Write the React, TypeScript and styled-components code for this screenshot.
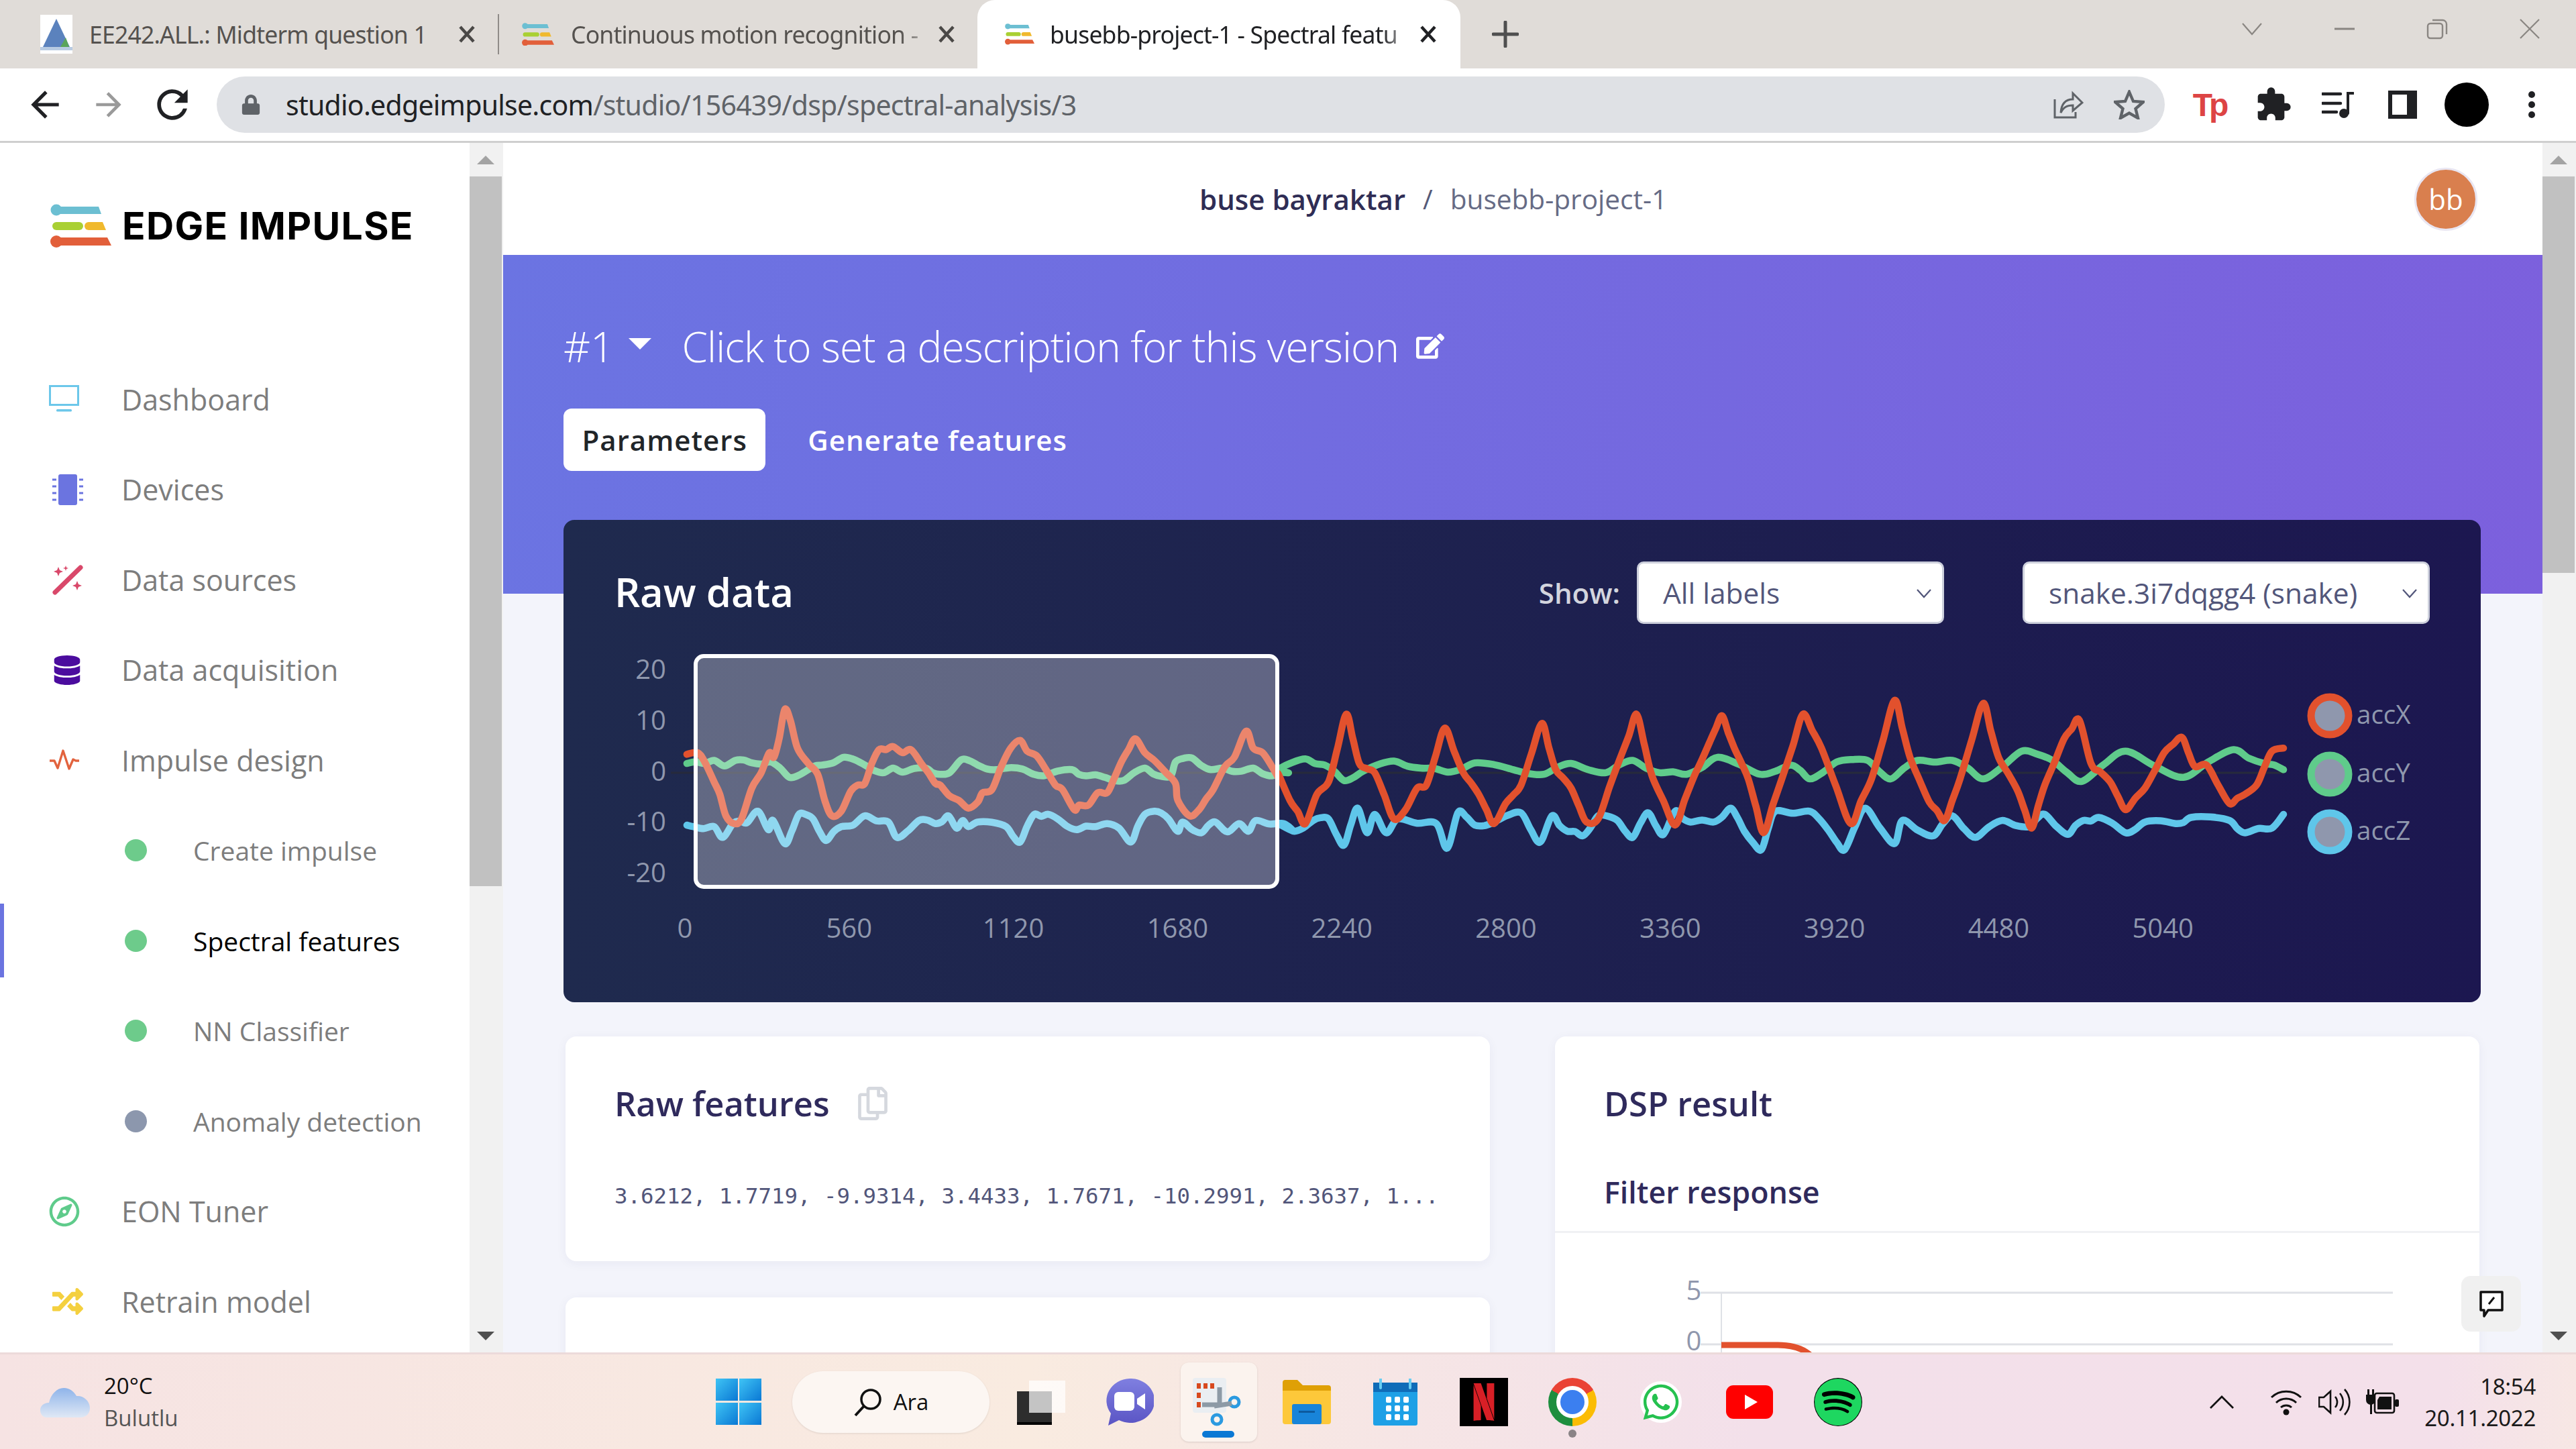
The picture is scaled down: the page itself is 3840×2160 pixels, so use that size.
import React from "react";
import styled, { createGlobalStyle } from "styled-components";
import { FaDatabase, FaRegCompass, FaRandom, FaRegCopy, FaEdit, FaWhatsapp, FaSpotify, FaLock } from "react-icons/fa";
import { MdArrowBack, MdArrowForward, MdRefresh, MdExtension } from "react-icons/md";
import { SiNetflix } from "react-icons/si";

const Global = createGlobalStyle`
  html, body { margin: 0; padding: 0; background: #fff; }
  #root { width: 3840px; height: 2160px; overflow: hidden; }
  * { box-sizing: border-box; }
`;

const Screen = styled.div`
  width: 3840px; height: 2160px; display: flex; flex-direction: column;
  font-family: "Open Sans", "Noto Sans", sans-serif; overflow: hidden;
`;

/* ---------- browser chrome ---------- */
const TabStrip = styled.div`
  height: 102px; background: #e0dcd8; display: flex; align-items: stretch; padding-left: 40px; flex: none;
`;
const Tab = styled.div<{ $w: number; $pl: number; $active?: boolean }>`
  width: ${p => p.$w}px; display: flex; align-items: center; position: relative;
  padding-left: ${p => p.$pl}px; padding-right: ${p => (p.$active ? 33 : 31)}px;
  background: ${p => (p.$active ? "#fff" : "transparent")};
  border-radius: ${p => (p.$active ? "26px 26px 0 0" : "0")};
`;
const TabSep = styled.div`
  width: 2px; height: 60px; background: #8f8b88; align-self: center; flex: none;
`;
const Favicon = styled.span`
  width: 48px; height: 48px; flex: none; display: flex; align-items: center; justify-content: center;
`;
const TabTitle = styled.span<{ $active?: boolean; $fade?: boolean }>`
  flex: 1; margin-left: ${p => (p.$active ? 21 : 25)}px; font-family: "Noto Sans", sans-serif; font-size: 35.5px;
  letter-spacing: -0.8px; white-space: nowrap; overflow: hidden;
  color: ${p => (p.$active ? "#202124" : "#55524f")};
  ${p => p.$fade ? "-webkit-mask-image: linear-gradient(90deg,#000 90%,transparent); mask-image: linear-gradient(90deg,#000 90%,transparent);" : ""}
`;
const NewTab = styled.div`
  width: 134px; display: flex; align-items: center; justify-content: center; flex: none;
`;
const WinControls = styled.div`
  margin-left: auto; display: flex; align-items: center; padding-bottom: 16px;
`;
const WinBtn = styled.div`
  width: 138px; display: flex; justify-content: center; align-items: center;
`;
const Toolbar = styled.div`
  height: 111px; flex: none; background: #fff; border-bottom: 3px solid #cfcfcf; display: flex; align-items: flex-start; padding-top: 12px;
`;
const NavIcon = styled.div<{ $w: number; $mr?: number }>`
  width: ${p => p.$w}px; height: 84px; margin-right: ${p => p.$mr || 0}px; display: flex; align-items: center; justify-content: center; flex: none;
`;
const Omnibox = styled.div`
  width: 2904px; height: 84px; border-radius: 42px; background: #dfe1e5; display: flex; align-items: center;
  padding-left: 36px; padding-right: 30px; flex: none;
`;
const Url = styled.span`
  margin-left: 37px; font-family: "Noto Sans", sans-serif; font-size: 41px; letter-spacing: -0.75px; color: #5f6368; white-space: nowrap; flex: 1;
`;
const UrlHost = styled.span` color: #202124; `;
const ExtRow = styled.div`
  display: flex; align-items: center; height: 84px; padding-left: 18px;
`;
const TpBadge = styled.span`
  font-family: "Liberation Sans", sans-serif; font-weight: 700; font-size: 48px; letter-spacing: -5px; color: #dd4444;
`;
const SidePanel = styled.div`
  width: 43px; height: 42px; border: solid #202124; border-width: 6px 15px 6px 6px; background: #fff;
`;
const ProfileDot = styled.div`
  width: 66px; height: 66px; border-radius: 50%; background: #000;
`;
const Dots = styled.div`
  display: flex; flex-direction: column; gap: 5px; span { width: 10px; height: 10px; border-radius: 50%; background: #202124; }
`;

/* ---------- body ---------- */
const Body = styled.div`
  flex: 1; min-height: 0; display: flex; background: #fff;
`;
const Sidebar = styled.nav`
  width: 700px; flex: none; overflow: hidden; background: #fff; display: flex; flex-direction: column;
`;
const LogoBlock = styled.div`
  height: 315px; flex: none; padding: 91px 0 0 75px; display: flex; align-items: flex-start; gap: 16px;
`;
const Brand = styled.span`
  font-family: "Inter", sans-serif; font-weight: 700; font-size: 57px; letter-spacing: 1.35px; color: #000; line-height: 66px; white-space: nowrap;
`;
const NavRow = styled.div<{ $sub?: boolean; $active?: boolean }>`
  height: 134.5px; flex: none; display: flex; align-items: center; position: relative;
  padding-left: ${p => (p.$sub ? 186 : 73)}px;
  font-size: ${p => (p.$sub ? 39 : 43)}px;
  color: ${p => (p.$active ? "#000" : "#7d7d7d")};
  ${p => p.$active ? "&::before { content: ''; position: absolute; left: 0; top: 12px; width: 6px; height: 110px; background: #6b74e0; }" : ""}
`;
const NavIconBox = styled.span<{ $c: string; $shift?: boolean }>`
  width: 108px; flex: none; display: flex; align-items: center; color: ${p => p.$c}; padding-left: ${p => (p.$shift ? 5 : 0)}px;
`;
const Dot = styled.span<{ $c: string }>`
  width: 33px; height: 33px; border-radius: 50%; background: ${p => p.$c}; flex: none; margin-right: 69px;
`;
const Scrollbar = styled.div<{ $thumb: number }>`
  width: 50px; flex: none; background: #f1f1f1; display: flex; flex-direction: column; align-items: flex-start;
  i { display: block; width: 48px; height: ${p => p.$thumb}px; background: #c1c1c1; }
`;
const ScrollBtn = styled.div<{ $down?: boolean }>`
  width: 48px; height: 50px; flex: none; display: flex; align-items: center; justify-content: center;
  margin-top: ${p => (p.$down ? "auto" : "0")};
  &::after {
    content: ""; width: 0; height: 0; border-left: 13px solid transparent; border-right: 13px solid transparent;
    ${p => p.$down ? "border-top: 13px solid #505050;" : "border-bottom: 13px solid #a3a3a3;"}
  }
`;
const Main = styled.main`
  flex: 1; min-width: 0; display: flex; flex-direction: column; overflow: hidden; background: #f3f4fb; position: relative;
`;
const TopHeader = styled.header`
  height: 167px; flex: none; background: #fff; display: flex; align-items: center; padding: 0 97px 0 1038px; white-space: nowrap;
`;
const Owner = styled.span` font-weight: 600; color: #2f2d55; font-size: 42px; `;
const Slash = styled.span` margin: 0 26px; color: #555a78; font-size: 40px; `;
const ProjectName = styled.span` color: #666b85; font-weight: 400; font-size: 40.6px; `;
const Avatar = styled.div`
  margin-left: auto; width: 94px; height: 94px; border-radius: 50%; background: #d97f4e; border: 3px solid #e9e6f2; color: #fff;
  display: flex; align-items: center; justify-content: center; font-size: 42px;
`;
const Hero = styled.section`
  height: 505px; flex: none; background: linear-gradient(95deg, #6b74e2, #7c60dd); padding: 96px 0 0 90px; color: #fff;
`;
const VersionRow = styled.div`
  display: flex; align-items: center; height: 80px; font-weight: 300; font-size: 62px; white-space: nowrap;
`;
const Caret = styled.span`
  width: 0; height: 0; margin: 0 45px 8px 22px; border-left: 17px solid transparent; border-right: 17px solid transparent; border-top: 17px solid #fff;
`;
const Description = styled.span` letter-spacing: -0.87px; `;
const EditWrap = styled.span` margin-left: 26px; display: flex; align-items: center; `;
const HeroTabs = styled.div` display: flex; align-items: center; gap: 63px; margin-top: 53px; `;
const HeroTab = styled.div<{ $on?: boolean }>`
  height: 93px; padding: 0 ${p => (p.$on ? 27.5 : 0)}px; border-radius: 12px; display: flex; align-items: center; font-weight: 600; font-size: 42px; letter-spacing: 1px;
  background: ${p => (p.$on ? "#fff" : "transparent")}; color: ${p => (p.$on ? "#212529" : "#fff")};
`;
const Content = styled.div`
  margin-top: -110px; padding: 0 92px 0 90px; position: relative; flex: none;
`;
const RawCard = styled.section`
  height: 719px; border-radius: 16px; background: linear-gradient(90deg, #1f2a4e, #1c1750); display: flex; flex-direction: column;
`;
const RawHeader = styled.div`
  display: flex; align-items: center; padding: 62px 76px 20px 76px; flex: none;
`;
const RawTitle = styled.h2`
  margin: 0 auto 4px 0; font-weight: 600; font-size: 60px; color: #fff; letter-spacing: -.2px;
`;
const ShowLabel = styled.span`
  color: #d3d5de; font-weight: 600; font-size: 42px; margin-right: 25px;
`;
const SelectBox = styled.div<{ $w: number; $ml?: number }>`
  width: ${p => p.$w}px; height: 93px; margin-left: ${p => p.$ml || 0}px; border-radius: 10px; background: #fff; border: 3px solid #cdd0dc;
  color: #52567a; font-size: 42.4px; display: flex; align-items: center; justify-content: space-between; padding: 0 14px 0 36px; white-space: nowrap;
`;
const ChartSvg = styled.svg`
  display: block; flex: none; width: 100%; height: 544px;
  text { font-family: "Open Sans", sans-serif; font-size: 40px; fill: #8f97ad; }
  text.legend { font-size: 38.5px; }
`;
const CardGrid = styled.div`
  display: grid; grid-template-columns: 1fr 1fr; gap: 97px; margin-top: 51px; padding: 0 2px 0 3px; align-items: start;
`;
const Column = styled.div` display: flex; flex-direction: column; gap: 54px; `;
const Card = styled.section<{ $h: number }>`
  height: ${p => p.$h}px; background: #fff; border-radius: 16px; box-shadow: 0 3px 16px rgba(40,40,90,.05); overflow: hidden;
`;
const CardTitle = styled.h3`
  margin: 65px 0 0 73px; font-weight: 600; font-size: 50.6px; line-height: 70px; color: #2f2a5c; display: flex; align-items: center; gap: 39px;
`;
const CardBody = styled.div`
  margin: 78px 0 0 73px; font-family: "DejaVu Sans Mono", monospace; font-size: 32.4px; line-height: 50px; color: #52567a; white-space: nowrap;
`;
const SubTitle = styled.div`
  margin: 67px 0 0 0; padding: 0 0 28px 73px; border-bottom: 3px solid #f0f1f4; font-weight: 600; font-size: 44.8px; line-height: 60px; color: #2f2a5c;
`;
const FilterSvg = styled.svg`
  display: block; width: 100%; height: 240px;
  text { font-family: "Open Sans", sans-serif; font-size: 40px; fill: #8f97ad; }
`;
const FeedbackBtn = styled.div`
  position: absolute; left: 2919px; top: 1689px; width: 89px; height: 83px; background: #f0f0f0; border-radius: 14px;
  display: flex; align-items: center; justify-content: center;
`;

/* ---------- taskbar ---------- */
const Taskbar = styled.footer`
  height: 144px; flex: none; display: flex; align-items: center; border-top: 3px solid #ecdada;
  background: linear-gradient(90deg, #f6e3e3 0%, #f9ebe0 40%, #f3e0ea 68%, #f4e0ea 95%, #f7e7e4 100%);
`;
const Weather = styled.div`
  width: 1035px; flex: none; display: flex; align-items: center; padding-left: 60px; gap: 21px; font-size: 33px; line-height: 48px; color: #111;
`;
const WeatherText = styled.div`
  display: flex; flex-direction: column; span + span { color: #555; }
`;
const Slot = styled.div<{ $hl?: boolean }>`
  width: 132px; height: 118px; flex: none; display: flex; align-items: center; justify-content: center; position: relative;
  ${p => p.$hl ? "&::before { content:''; position:absolute; left: 10px; right: 8px; top: 0; bottom: 0; background: #fbf3ee; border-radius: 12px; box-shadow: 0 1px 3px rgba(0,0,0,.12);}" : ""}
  & > * { position: relative; }
`;
const RunDot = styled.span`
  position: absolute !important; left: 50%; margin-left: -6px; bottom: 6px; width: 12px; height: 12px; border-radius: 50%; background: #8a8386;
`;
const RunBar = styled.span`
  position: absolute !important; left: 50%; margin-left: -24px; bottom: 6px; width: 48px; height: 10px; border-radius: 5px; background: #0a78d4;
`;
const SearchPill = styled.div`
  width: 294px; height: 92px; margin: 0 11px 0 14px; flex: none; background: #fcf6f2; border-radius: 46px; box-shadow: 0 1px 3px rgba(0,0,0,.1);
  display: flex; align-items: center; justify-content: center; gap: 16px; font-size: 33px; color: #111;
`;
const ChromeLogo = styled.div`
  width: 72px; height: 72px; border-radius: 50%;
  background: conic-gradient(#ea4335 0 60deg, #fbbc04 60deg 180deg, #1e8e3e 180deg 300deg, #ea4335 300deg 360deg);
  display: flex; align-items: center; justify-content: center;
  &::after { content: ""; width: 36px; height: 36px; border-radius: 50%; background: #3b7ff0; border: 6px solid #fff; }
`;
const AppTile = styled.div<{ $size: number; $bg: string; $round?: boolean }>`
  width: ${p => p.$size}px; height: ${p => p.$size}px; background: ${p => p.$bg}; border-radius: ${p => (p.$round ? "50%" : "0")};
  display: flex; align-items: center; justify-content: center;
`;
const Tray = styled.div`
  margin-left: auto; width: 576px; flex: none; display: flex; align-items: center; padding-right: 60px;
`;
const TrayIcon = styled.div<{ $w: number }>`
  width: ${p => p.$w}px; flex: none; display: flex; justify-content: center;
`;
const Clock = styled.div`
  flex: 1; text-align: right; font-size: 33px; line-height: 47px; color: #1b1b1b; font-family: "Noto Sans", sans-serif; letter-spacing: -.3px;
`;

/* ---------- drawings ---------- */
const EiLogo = ({ w = 91 }: { w?: number }) => (
  <svg width={w} height={(w * 66) / 91} viewBox="0 0 91 66">
    <circle cx="9" cy="9" r="8.5" fill="#6cbfd2" />
    <path d="M9 4H72L76 15H9Z" fill="#6cbfd2" />
    <rect x="3" y="27" width="46" height="12" rx="6" fill="#a9d033" />
    <path d="M57 27H78L83 39H57a6 6 0 0 1 0-12Z" fill="#f0b92d" />
    <circle cx="9" cy="56" r="9" fill="#e25f3a" />
    <path d="M9 50H85L91 62H9Z" fill="#e25f3a" />
  </svg>
);
const MoodleIcon = () => (
  <svg width="48" height="58" viewBox="0 0 48 58">
    <rect width="48" height="58" fill="#fff" />
    <path d="M24 6 44 48H4Z" fill="#5b82bd" />
    <path d="M30 48 38 34 43 48Z" fill="#5aa55a" />
    <rect y="48" width="48" height="5" fill="#b8cbe2" />
  </svg>
);
const TabClose = ({ c }: { c: string }) => (
  <svg width="30" height="30" viewBox="0 0 30 30">
    <path d="M5 4 25 26M25 4 5 26" stroke={c} strokeWidth="4.5" />
  </svg>
);
const Monitor = () => (
  <svg width="46" height="42" viewBox="0 0 46 42">
    <rect x="1.500" y="1.500" width="42" height="28" fill="none" stroke="#6cc7ea" strokeWidth="3" />
    <rect x="11" y="36" width="23" height="3.5" rx="1.5" fill="#6cc7ea" />
  </svg>
);
const Chip = () => (
  <svg width="46" height="46" viewBox="0 0 46 46">
    <rect x="9" y="0" width="28" height="46" rx="3" fill="#6b74e0" />
    {[8, 18, 28, 38].map(y => (
      <g key={y}>
        <rect x="0" y={y - 1.5} width="6" height="3" fill="#6b74e0" />
        <rect x="40" y={y - 1.5} width="6" height="3" fill="#6b74e0" />
      </g>
    ))}
  </svg>
);
const Wand = () => (
  <svg width="46" height="46" viewBox="0 0 46 46">
    <path d="M4 42 42 5" stroke="#d9486a" strokeWidth="7" strokeLinecap="round" />
    <path d="M9 4 11 9 16 11 11 13 9 18 7 13 2 11 7 9ZM20 2 21 5 24 6 21 7 20 10 19 7 16 6 19 5ZM37 25 39 30 44 32 39 34 37 39 35 34 30 32 35 30Z" fill="#d9486a" />
  </svg>
);
const Pulse = () => (
  <svg width="46" height="34" viewBox="0 0 46 34">
    <path d="M1 18H8L13 29 21 3 30 30 36 16 40 18H45" fill="none" stroke="#e2633e" strokeWidth="3.4" strokeLinejoin="round" />
  </svg>
);

type Pt = [number, number];
const z5 = (a: number[]) => { const r: Pt[] = []; for (let i = 0; i < a.length; i += 2) r.push([840 + a[i] / 1.425, 780 + a[i + 1] / 2.178]); return r; };
const z6 = (a: number[]) => { const r: Pt[] = []; for (let i = 0; i < a.length; i += 2) r.push([1900 + a[i] / 0.871, 780 + a[i + 1] / 2.178]); return r; };

/* adds the small sensor wobble between traced extremes, then draws a Catmull-Rom curve */
const series = (a: number[], b: number[], wobble: number) => {
  const raw = [...z5(a), ...z6(b)];
  const pts: Pt[] = [];
  raw.forEach((p, i) => {
    pts.push(p);
    const n = raw[i + 1];
    if (n && n[0] - p[0] > 18) {
      pts.push([(p[0] + n[0]) / 2, (p[1] + n[1]) / 2 + (i % 2 ? wobble : -wobble)]);
    }
  });
  let d = `M${pts[0][0].toFixed(1)} ${pts[0][1].toFixed(1)}`;
  for (let i = 0; i < pts.length - 1; i++) {
    const p0 = pts[i - 1] || pts[i], p1 = pts[i], p2 = pts[i + 1], p3 = pts[i + 2] || p2;
    const c1x = p1[0] + (p2[0] - p0[0]) / 6, c1y = p1[1] + (p2[1] - p0[1]) / 6;
    const c2x = p2[0] - (p3[0] - p1[0]) / 6, c2y = p2[1] - (p3[1] - p1[1]) / 6;
    d += `C${c1x.toFixed(1)} ${c1y.toFixed(1)} ${c2x.toFixed(1)} ${c2y.toFixed(1)} ${p2[0].toFixed(1)} ${p2[1].toFixed(1)}`;
  }
  return d;
};

const orangeA = [262,750,285,745,300,775,320,840,332,880,345,950,362,975,378,960,400,860,420,810,437,745,447,760,458,700,470,605,482,640,497,730,520,780,540,815,555,900,570,950,590,935,610,870,625,850,640,845,655,780,670,735,685,735,700,725,720,745,738,735,760,780,790,845,800,850,820,885,840,900,860,925,880,905,890,875,910,865,930,790,950,730,970,705,985,740,1005,755,1025,800,1045,850,1060,865,1085,930,1095,915,1115,915,1135,875,1155,875,1185,775,1215,700,1235,745,1255,770,1280,810,1300,845,1305,900,1330,950,1350,930,1380,865,1405,790,1425,760,1450,675,1465,730,1485,745,1505,790,1520,830];
const orangeB = [5,815,20,900,40,975,55,880,70,840,93,620,110,780,130,810,155,960,170,930,185,860,197,850,221,665,245,810,265,880,285,975,300,910,320,850,347,650,365,800,385,860,405,970,420,960,435,855,460,690,470,620,490,820,520,980,545,820,565,710,581,625,597,730,615,830,635,1005,660,820,686,620,710,730,748,975,775,830,805,575,825,760,850,905,870,965,890,830,920,585,940,760,965,870,983,990,1000,850,1025,700,1045,640,1060,780,1085,840,1105,930,1130,860,1155,745,1178,695,1195,790,1210,785,1240,910,1260,880,1275,850,1295,740,1310,730];
const greenA = [262,780,300,780,320,770,342,788,365,770,400,778,440,775,480,825,520,800,550,785,595,760,640,785,680,810,700,795,720,808,770,795,800,815,820,810,845,768,880,785,920,800,975,798,1020,820,1080,800,1110,820,1150,825,1190,835,1235,795,1270,822,1290,820,1300,775,1335,762,1375,800,1400,795,1440,805,1465,795,1505,820,1540,810];
const greenB = [5,800,40,765,65,785,90,835,115,805,155,772,190,795,225,808,260,778,310,800,350,815,385,780,430,810,465,770,500,810,535,815,575,760,630,815,670,785,695,830,730,775,770,770,800,830,835,770,880,770,920,830,970,740,1010,770,1048,838,1105,740,1180,825,1245,735,1285,780,1310,800];
const blueA = [262,980,275,985,320,985,338,1020,360,975,390,972,413,935,435,995,445,965,470,1040,500,945,530,960,558,1030,590,985,615,980,640,950,690,970,708,1020,755,965,790,975,818,950,835,990,848,965,860,985,880,970,940,985,970,1035,1000,945,1030,945,1050,960,1090,995,1130,985,1155,975,1180,990,1205,1035,1235,945,1255,935,1285,960,1305,1000,1315,970,1355,1005,1385,970,1410,1002,1435,975,1455,1000,1470,965,1530,975,1550,1000];
const blueB = [5,975,25,1000,50,965,70,960,90,1045,108,925,120,1005,130,945,145,1005,160,960,210,975,224,1055,238,940,260,980,285,970,320,940,345,1035,360,950,380,1000,400,1015,420,950,445,965,465,1020,485,940,505,1010,520,935,540,970,570,970,592,925,610,1000,632,1060,650,935,695,935,720,1000,740,1060,767,925,805,1040,815,965,855,1015,880,950,910,1020,945,965,980,985,1000,945,1030,1010,1050,965,1070,955,1105,1005,1130,970,1170,975,1190,955,1240,965,1260,1005,1295,990,1310,945];

const RawChart = () => (
  <ChartSvg viewBox="840 950 2858 544" preserveAspectRatio="none">
    {[["20", 998], ["10", 1074], ["0", 1150], ["-10", 1225], ["-20", 1301]].map(([t, y]) => (
      <text key={t} x="993" y={Number(y) + 14} textAnchor="end">{t}</text>
    ))}
    {["0", "560", "1120", "1680", "2240", "2800", "3360", "3920", "4480", "5040"].map((t, i) => (
      <text key={t} x={1021 + i * 244.8} y="1398" textAnchor="middle">{t}</text>
    ))}
    <line x1="1000" x2="3404" y1="1152" y2="1152" stroke="#262a3c" strokeWidth="3" />
    <path d={series(blueA, blueB, 3)} fill="none" stroke="#5fc6ea" strokeWidth="10.5" strokeLinejoin="round" strokeLinecap="round" />
    <path d={series(greenA, greenB, 2.5)} fill="none" stroke="#5fcb8b" strokeWidth="10.5" strokeLinejoin="round" strokeLinecap="round" />
    <path d={series(orangeA, orangeB, 1)} fill="none" stroke="#e2512d" strokeWidth="10.5" strokeLinejoin="round" strokeLinecap="round" />
    <rect x="1037" y="978" width="867" height="344" rx="12" fill="rgba(255,255,255,.3)" stroke="#fff" strokeWidth="6" />
    {[["accX", 1066, "#e2512d"], ["accY", 1153, "#5fcb8b"], ["accZ", 1239, "#5fc6ea"]].map(([t, y, c]) => (
      <g key={t as string}>
        <circle cx="3473" cy={(y as number) + 1} r="28" fill="#8f97ad" stroke={c as string} strokeWidth="11" />
        <text className="legend" x="3513" y={(y as number) + 13}>{t}</text>
      </g>
    ))}
  </ChartSvg>
);

const SelectChevron = () => (
  <svg width="26" height="26" viewBox="0 0 26 26"><path d="M3 8 13 19 23 8" fill="none" stroke="#52567a" strokeWidth="2.2" /></svg>
);

const navTop = [
  { t: "Dashboard", c: "#6cc7ea", i: <Monitor /> },
  { t: "Devices", c: "#6b74e0", i: <Chip />, s: true },
  { t: "Data sources", c: "#d9486a", i: <Wand />, s: true },
  { t: "Data acquisition", c: "#4b0c9e", i: <FaDatabase size={44} />, s: true },
  { t: "Impulse design", c: "#e2633e", i: <Pulse /> },
];
const navSub = [
  { t: "Create impulse", c: "#6dcb8b" },
  { t: "Spectral features", c: "#6dcb8b", a: true },
  { t: "NN Classifier", c: "#6dcb8b" },
  { t: "Anomaly detection", c: "#8c97ad" },
];
const navEnd = [
  { t: "EON Tuner", c: "#5fcb8b", i: <FaRegCompass size={46} /> },
  { t: "Retrain model", c: "#f4d03f", i: <FaRandom size={46} />, s: true },
];

export default function App() {
  return (
    <Screen>
      <Global />
      <TabStrip>
        <Tab $w={702} $pl={20}>
          <Favicon><MoodleIcon /></Favicon>
          <TabTitle>EE242.ALL.: Midterm question 1</TabTitle>
          <TabClose c="#4a4846" />
        </Tab>
        <TabSep />
        <Tab $w={713} $pl={34}>
          <Favicon><EiLogo w={48} /></Favicon>
          <TabTitle $fade>Continuous motion recognition -</TabTitle>
          <TabClose c="#4a4846" />
        </Tab>
        <Tab $w={720} $pl={39} $active>
          <Favicon><EiLogo w={44} /></Favicon>
          <TabTitle $active $fade>busebb-project-1 - Spectral featu</TabTitle>
          <TabClose c="#202124" />
        </Tab>
        <NewTab>
          <svg width="40" height="40" viewBox="0 0 40 40"><path d="M20 2V38M2 20H38" stroke="#4f4f4f" strokeWidth="5" strokeLinecap="round" /></svg>
        </NewTab>
        <WinControls>
          <WinBtn><svg width="32" height="20" viewBox="0 0 32 20"><path d="M2 2 16 18 30 2" fill="none" stroke="#8a8682" strokeWidth="2.2" /></svg></WinBtn>
          <WinBtn><svg width="32" height="6" viewBox="0 0 32 6"><path d="M1 3H31" stroke="#8a8682" strokeWidth="3" /></svg></WinBtn>
          <WinBtn><svg width="32" height="32" viewBox="0 0 32 32"><rect x="2" y="8" width="22" height="22" rx="4" fill="none" stroke="#8a8682" strokeWidth="2.4" /><path d="M9 3H24a6 6 0 0 1 6 6V24" fill="none" stroke="#8a8682" strokeWidth="2.4" /></svg></WinBtn>
          <WinBtn><svg width="32" height="32" viewBox="0 0 32 32"><path d="M2 2 30 30M30 2 2 30" stroke="#8a8682" strokeWidth="2.2" /></svg></WinBtn>
        </WinControls>
      </TabStrip>

      <Toolbar>
        <NavIcon $w={134}><MdArrowBack size={62} color="#202124" /></NavIcon>
        <NavIcon $w={56}><MdArrowForward size={62} color="#9a9a9a" /></NavIcon>
        <NavIcon $w={133}><MdRefresh size={68} color="#202124" /></NavIcon>
        <Omnibox>
          <FaLock size={30} color="#5f6368" />
          <Url><UrlHost>studio.edgeimpulse.com</UrlHost>/studio/156439/dsp/spectral-analysis/3</Url>
          <NavIcon $w={70} $mr={33}>
            <svg width="46" height="44" viewBox="0 0 46 44"><path d="M3 14V41H34V33M12 34C13 20 20 14 30 14V5L44 19 30 31V23C21 23 16 26 12 34Z" fill="none" stroke="#5f6368" strokeWidth="3" /></svg>
          </NavIcon>
          <NavIcon $w={46}>
            <svg width="46" height="44" viewBox="0 0 46 44"><path d="M23 3 29 17 44 18 32.5 28 36 42 23 34.5 10 42 13.5 28 2 18 17 17Z" fill="none" stroke="#5f6368" strokeWidth="4.4" /></svg>
          </NavIcon>
        </Omnibox>
        <ExtRow>
          <NavIcon $w={96}><TpBadge>Tp</TpBadge></NavIcon>
          <NavIcon $w={96}><MdExtension size={56} color="#202124" /></NavIcon>
          <NavIcon $w={96}>
            <svg width="48" height="40" viewBox="0 0 48 40"><path d="M1 4H28M1 18H28M1 31H22" stroke="#202124" strokeWidth="4.5" strokeLinecap="round" /><path d="M39 33V3H47" fill="none" stroke="#202124" strokeWidth="4" strokeLinecap="round" /><circle cx="33" cy="33" r="7" fill="#202124" /></svg>
          </NavIcon>
          <NavIcon $w={96}><SidePanel /></NavIcon>
          <NavIcon $w={96}><ProfileDot /></NavIcon>
          <NavIcon $w={98}><Dots><span /><span /><span /></Dots></NavIcon>
        </ExtRow>
      </Toolbar>

      <Body>
        <Sidebar>
          <LogoBlock><EiLogo /><Brand>EDGE IMPULSE</Brand></LogoBlock>
          {navTop.map(n => (
            <NavRow key={n.t}><NavIconBox $c={n.c} $shift={n.s}>{n.i}</NavIconBox>{n.t}</NavRow>
          ))}
          {navSub.map(n => (
            <NavRow key={n.t} $sub $active={n.a}><Dot $c={n.c} />{n.t}</NavRow>
          ))}
          {navEnd.map(n => (
            <NavRow key={n.t}><NavIconBox $c={n.c} $shift={n.s}>{n.i}</NavIconBox>{n.t}</NavRow>
          ))}
        </Sidebar>
        <Scrollbar $thumb={1058}>
          <ScrollBtn /><i /><ScrollBtn $down />
        </Scrollbar>

        <Main>
          <TopHeader>
            <Owner>buse bayraktar</Owner>
            <Slash>/</Slash>
            <ProjectName>busebb-project-1</ProjectName>
            <Avatar>bb</Avatar>
          </TopHeader>
          <Hero>
            <VersionRow>
              #1<Caret />
              <Description>Click to set a description for this version</Description>
              <EditWrap><FaEdit size={42} /></EditWrap>
            </VersionRow>
            <HeroTabs>
              <HeroTab $on>Parameters</HeroTab>
              <HeroTab>Generate features</HeroTab>
            </HeroTabs>
          </Hero>
          <Content>
            <RawCard>
              <RawHeader>
                <RawTitle>Raw data</RawTitle>
                <ShowLabel>Show:</ShowLabel>
                <SelectBox $w={458}>All labels<SelectChevron /></SelectBox>
                <SelectBox $w={607} $ml={117}>snake.3i7dqgg4 (snake)<SelectChevron /></SelectBox>
              </RawHeader>
              <RawChart />
            </RawCard>
            <CardGrid>
              <Column>
                <Card $h={335}>
                  <CardTitle>Raw features <FaRegCopy size={50} color="#d5d8de" /></CardTitle>
                  <CardBody>3.6212, 1.7719, -9.9314, 3.4433, 1.7671, -10.2991, 2.3637, 1...</CardBody>
                </Card>
                <Card $h={300} />
              </Column>
              <Card $h={700}>
                <CardTitle>DSP result</CardTitle>
                <SubTitle>Filter response</SubTitle>
                <FilterSvg viewBox="2318 1838 1378 240" preserveAspectRatio="none">
                  <text x="2525" y="1938" textAnchor="middle">5</text>
                  <text x="2525" y="2013" textAnchor="middle">0</text>
                  <line x1="2535" x2="3567" y1="1927" y2="1927" stroke="#dfe1e6" strokeWidth="3" />
                  <line x1="2535" x2="3567" y1="2004" y2="2004" stroke="#dfe1e6" strokeWidth="3" />
                  <line x1="2566" x2="2566" y1="1927" y2="2078" stroke="#dfe1e6" strokeWidth="2" />
                  <path d="M2566 2005H2650C2685 2005 2700 2015 2730 2055" fill="none" stroke="#e2512d" strokeWidth="9" />
                </FilterSvg>
              </Card>
            </CardGrid>
          </Content>
          <FeedbackBtn>
            <svg width="38" height="42" viewBox="0 0 38 42"><path d="M3 3H35V30H14L8 39V30H3Z" fill="#fff" stroke="#111" strokeWidth="3.5" strokeLinejoin="round" /><path d="M15 21 23 11" stroke="#111" strokeWidth="3" /></svg>
          </FeedbackBtn>
        </Main>
        <Scrollbar $thumb={591}>
          <ScrollBtn /><i /><ScrollBtn $down />
        </Scrollbar>
      </Body>

      <Taskbar>
        <Weather>
          <svg width="74" height="48" viewBox="0 0 74 48">
            <defs><linearGradient id="cl" x1="0" y1="0" x2="0" y2="1"><stop offset="0" stopColor="#8fb4ea" /><stop offset="1" stopColor="#dfe8f5" /></linearGradient></defs>
            <path d="M10 47C3 47 0 41 0 36 0 30 5 25 13 25 16 12 25 3 35 3 44 3 50 8 54 15 64 14 74 22 74 33 74 42 67 47 60 47Z" fill="url(#cl)" />
          </svg>
          <WeatherText><span>20°C</span><span>Bulutlu</span></WeatherText>
        </Weather>
        <Slot>
          <svg width="68" height="69" viewBox="0 0 68 69">
            <defs><linearGradient id="w" x1="0" y1="0" x2="1" y2="1"><stop offset="0" stopColor="#3fc4f5" /><stop offset="1" stopColor="#0a78d4" /></linearGradient></defs>
            <rect width="33" height="33" fill="url(#w)" /><rect x="35" width="33" height="33" fill="url(#w)" />
            <rect y="36" width="33" height="33" fill="url(#w)" /><rect x="35" y="36" width="33" height="33" fill="url(#w)" />
          </svg>
        </Slot>
        <SearchPill>
          <svg width="44" height="44" viewBox="0 0 44 44"><circle cx="26" cy="18" r="14" fill="none" stroke="#111" strokeWidth="3.5" /><path d="M16 28 3 42" stroke="#111" strokeWidth="4" /></svg>
          Ara
        </SearchPill>
        <Slot>
          <svg width="72" height="68" viewBox="0 0 72 68">
            <rect x="0" y="18" width="52" height="50" fill="#2d2d2d" />
            <rect x="0" y="64" width="52" height="4" fill="#000" />
            <rect x="18" y="2" width="54" height="48" fill="rgba(255,255,255,.72)" />
          </svg>
        </Slot>
        <Slot>
          <svg width="72" height="70" viewBox="0 0 72 70">
            <defs><linearGradient id="t" x1="0" y1="0" x2="0" y2="1"><stop offset="0" stopColor="#7f7fe0" /><stop offset="1" stopColor="#5a54c4" /></linearGradient></defs>
            <path d="M36 0a36 33 0 1 1-16 62L4 70l4-18A36 33 0 0 1 36 0Z" fill="url(#t)" />
            <rect x="13" y="20" width="30" height="28" rx="6" fill="#fff" />
            <path d="M47 30 59 22V46L47 38Z" fill="#fff" />
          </svg>
        </Slot>
        <Slot $hl>
          <svg width="76" height="72" viewBox="0 0 76 72">
            <rect x="0" y="0" width="50" height="52" rx="4" fill="#eaeef2" />
            <path d="M6 8h6v8H6zM16 8h6v8H16zM26 8h6v8H26zM6 22h6v8H6zM6 36h6v8H6z" fill="#d8491e" />
            <path d="M40 14V40H14" fill="none" stroke="#8d9aa6" strokeWidth="7" />
            <circle cx="62" cy="36" r="7" fill="none" stroke="#2b9ae0" strokeWidth="5" />
            <circle cx="36" cy="62" r="7" fill="none" stroke="#2b9ae0" strokeWidth="5" />
            <path d="M32 42 58 38" stroke="#8d9aa6" strokeWidth="7" />
          </svg>
          <RunBar />
        </Slot>
        <Slot>
          <svg width="72" height="66" viewBox="0 0 72 66">
            <path d="M0 4a4 4 0 0 1 4-4h18l8 8h38a4 4 0 0 1 4 4v10H0Z" fill="#dfa006" />
            <path d="M0 16H72V62a4 4 0 0 1-4 4H4a4 4 0 0 1-4-4Z" fill="#fdc83a" />
            <rect x="14" y="36" width="44" height="30" rx="3" fill="#1884d9" />
            <rect x="24" y="46" width="24" height="3" fill="#0d5a9e" />
          </svg>
        </Slot>
        <Slot>
          <svg width="66" height="70" viewBox="0 0 66 70">
            <rect y="6" width="66" height="64" rx="3" fill="#1ea0e6" />
            <rect y="6" width="66" height="14" fill="#0f6cb8" />
            <path d="M11 0v14M55 0v14" stroke="#66cdf3" strokeWidth="4" strokeLinecap="round" />
            {[27, 40, 53].map(y => [16, 29, 42].map(x => (
              <rect key={`${x}-${y}`} x={x + 3} y={y} width="8" height="9" rx="2" fill="#fff" />
            )))}
          </svg>
        </Slot>
        <Slot>
          <AppTile $size={72} $bg="#000"><SiNetflix size={56} color="#d81f26" /></AppTile>
        </Slot>
        <Slot><ChromeLogo /><RunDot /></Slot>
        <Slot>
          <AppTile $size={62} $bg="#fff" $round><FaWhatsapp size={60} color="#25c14f" /></AppTile>
        </Slot>
        <Slot>
          <svg width="70" height="50" viewBox="0 0 70 50"><rect width="70" height="50" rx="11" fill="#f00" /><path d="M28 14 47 25 28 36Z" fill="#fff" /></svg>
        </Slot>
        <Slot>
          <AppTile $size={72} $bg="#000" $round><FaSpotify size={72} color="#1ed760" /></AppTile>
        </Slot>
        <Tray>
          <TrayIcon $w={96}><svg width="38" height="22" viewBox="0 0 38 22"><path d="M2 20 19 3 36 20" fill="none" stroke="#111" strokeWidth="2.8" /></svg></TrayIcon>
          <TrayIcon $w={96}><svg width="48" height="42" viewBox="0 0 48 42"><path d="M2 14a32 32 0 0 1 44 0M9 22a22 22 0 0 1 30 0M16 29a12 12 0 0 1 16 0" fill="none" stroke="#111" strokeWidth="3" /><circle cx="24" cy="36" r="4.5" fill="#111" /></svg></TrayIcon>
          <TrayIcon $w={48}><svg width="48" height="44" viewBox="0 0 48 44"><path d="M1 15H8L18 6V38L8 29H1Z" fill="none" stroke="#111" strokeWidth="2.6" /><path d="M25 14a12 12 0 0 1 0 16M32 9a20 20 0 0 1 0 26M39 3a28 28 0 0 1 0 38" fill="none" stroke="#111" strokeWidth="2.6" /></svg></TrayIcon>
          <TrayIcon $w={96}><svg width="50" height="38" viewBox="0 0 50 38"><path d="M0 8H14V16a7 7 0 0 1-14 0ZM2 0H5V8H2ZM9 0H12V8H9Z" fill="#111" /><rect x="6" y="22" width="3" height="15" fill="#111" /><rect x="13" y="6" width="29" height="29" rx="3" fill="none" stroke="#111" strokeWidth="2.6" /><path d="M20 11H38V30H17V16Z" fill="#111" /><rect x="43" y="15" width="6" height="11" rx="2" fill="#111" /></svg></TrayIcon>
          <Clock>18:54<br />20.11.2022</Clock>
        </Tray>
      </Taskbar>
    </Screen>
  );
}
